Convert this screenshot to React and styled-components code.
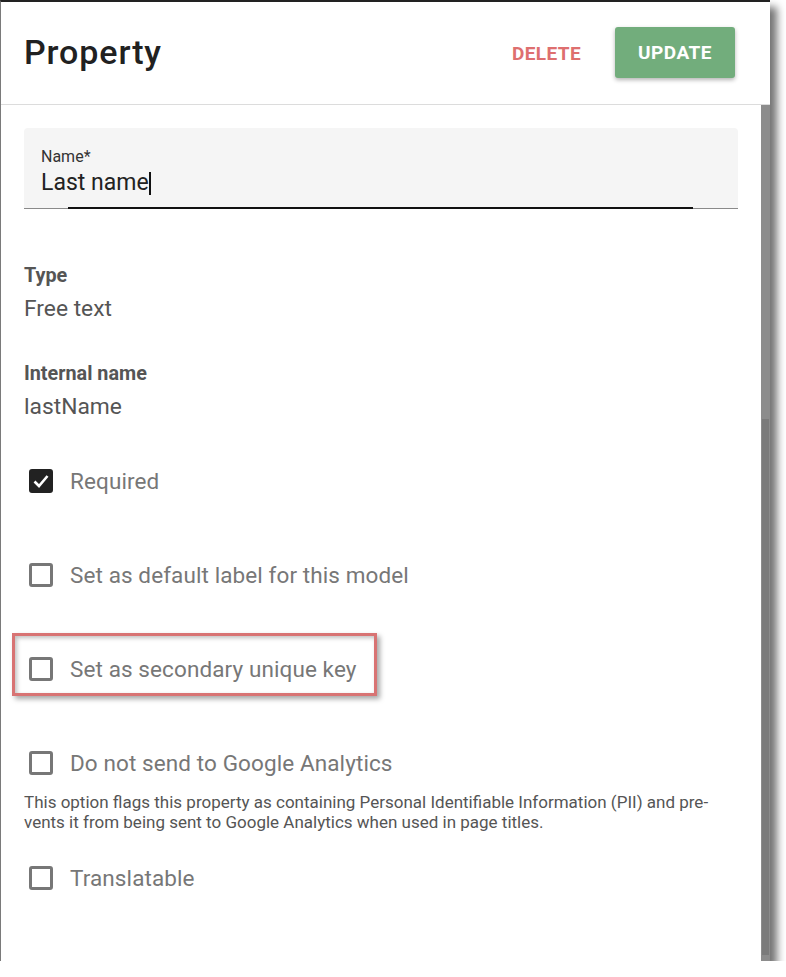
import React from "react";
import styled, { createGlobalStyle } from "styled-components";

const GlobalStyle = createGlobalStyle`
  body {
    margin: 0;
    background: #fff;
    font-family: Roboto, "Liberation Sans", sans-serif;
  }
`;

const Frame = styled.div`
  width: 769px;
  height: 959px;
  border-left: 1px solid #7a7a7a;
  border-top: 2px solid #222;
  background: #fff;
  box-shadow: 7px 7px 8px rgba(0, 0, 0, 0.55);
  display: flex;
  flex-direction: column;
`;

const Header = styled.header`
  height: 102px;
  flex: none;
  display: flex;
  align-items: center;
  justify-content: space-between;
  padding: 0 35px 0 23px;
  border-bottom: 1px solid #dcdcdc;
`;

const Title = styled.h1`
  margin: 0;
  font-size: 34px;
  font-weight: 500;
  color: #212121;
  letter-spacing: 0.9px;
  position: relative;
  top: -1px;
`;

const Actions = styled.div`
  display: flex;
  align-items: center;
  gap: 34px;
`;

const TextButton = styled.button`
  border: none;
  background: none;
  padding: 0;
  font-family: inherit;
  font-size: 19px;
  font-weight: 700;
  color: #de6f6f;
  letter-spacing: 0.4px;
`;

const RaisedButton = styled.button`
  width: 120px;
  height: 51px;
  border: none;
  border-radius: 3px;
  background: #72ad7c;
  color: #fff;
  font-family: inherit;
  font-size: 19px;
  font-weight: 700;
  letter-spacing: 0.5px;
  box-shadow: 0 2px 4px rgba(0, 0, 0, 0.3);
  position: relative;
  top: -1px;
`;

const Body = styled.div`
  flex: 1;
  display: flex;
  min-height: 0;
`;

const Content = styled.div`
  flex: 1;
  padding: 23px 23px 0 23px;
  display: flex;
  flex-direction: column;
`;

const ScrollTrack = styled.div`
  width: 9px;
  flex: none;
  background: #8c8c8c;
  display: flex;
  flex-direction: column;
  justify-content: flex-end;
  align-items: center;
  padding-bottom: 6px;
`;

const ScrollThumb = styled.div`
  width: 7px;
  height: 536px;
  background: #7b7b7b;
`;

const Field = styled.div`
  height: 81px;
  background: #f5f5f5;
  border-radius: 4px 4px 0 0;
  border-bottom: 1px solid #8a8a8a;
  padding: 19px 17px 0;
  position: relative;
  box-sizing: border-box;
  display: flex;
  flex-direction: column;
`;

const FieldLabel = styled.label`
  font-size: 16px;
  line-height: 20px;
  color: #333;
`;

const FieldValue = styled.div`
  font-size: 23px;
  line-height: 30px;
  color: #222;
  display: flex;
  align-items: center;
  margin-top: 1px;
`;

const Caret = styled.span`
  width: 2px;
  height: 23px;
  background: #111;
`;

const FocusLine = styled.div`
  position: absolute;
  left: 44px;
  right: 45px;
  bottom: -1px;
  height: 2px;
  background: #111;
`;

const Info = styled.div`
  display: flex;
  flex-direction: column;
  gap: 8px;
  margin-top: ${(p) => p.$top}px;
`;

const InfoLabel = styled.div`
  font-size: 19.8px;
  line-height: 24px;
  font-weight: 700;
  color: #555;
`;

const InfoValue = styled.div`
  font-size: 22.8px;
  line-height: 26px;
  color: #555;
`;

const Row = styled.label`
  position: relative;
  height: 40px;
  display: flex;
  align-items: center;
  gap: 17px;
  padding-left: 5px;
  margin-top: ${(p) => p.$top}px;
`;

const Box = styled.span`
  width: 24px;
  height: 24px;
  flex: none;
  box-sizing: border-box;
  border-radius: 3px;
  border: 3px solid ${(p) => (p.$checked ? "#222" : "#777")};
  background: ${(p) => (p.$checked ? "#222" : "transparent")};
  display: flex;
  align-items: center;
  justify-content: center;
`;

const RowText = styled.span`
  font-size: 22.5px;
  color: #777;
  letter-spacing: 0.1px;
`;

const Highlight = styled.span`
  position: absolute;
  left: -12px;
  top: -16px;
  width: 365px;
  height: 63px;
  box-sizing: border-box;
  border: 3px solid #d87373;
  box-shadow: 3px 3px 5px rgba(0, 0, 0, 0.35), inset 2px 2px 4px rgba(0, 0, 0, 0.25);
  pointer-events: none;
`;

const Hint = styled.p`
  margin: 9px 0 0;
  font-size: 17px;
  line-height: 20px;
  color: #555;
`;

const Checkbox = ({ checked, label, top, highlighted }) => (
  <Row $top={top}>
    <Box $checked={checked}>
      {checked && (
        <svg width="16" height="14" viewBox="0 0 16 14">
          <path d="M1.5 7.5 L6 12 L14.5 2" fill="none" stroke="#fff" strokeWidth="2.6" />
        </svg>
      )}
    </Box>
    <RowText>{label}</RowText>
    {highlighted && <Highlight />}
  </Row>
);

export default function App() {
  return (
    <>
      <GlobalStyle />
      <Frame>
        <Header>
          <Title>Property</Title>
          <Actions>
            <TextButton>DELETE</TextButton>
            <RaisedButton>UPDATE</RaisedButton>
          </Actions>
        </Header>
        <Body>
          <Content>
            <Field>
              <FieldLabel>Name*</FieldLabel>
              <FieldValue>
                Last name
                <Caret />
              </FieldValue>
              <FocusLine />
            </Field>
            <Info $top={55}>
              <InfoLabel>Type</InfoLabel>
              <InfoValue>Free text</InfoValue>
            </Info>
            <Info $top={40}>
              <InfoLabel>Internal name</InfoLabel>
              <InfoValue>lastName</InfoValue>
            </Info>
            <Checkbox checked label="Required" top={41} />
            <Checkbox label="Set as default label for this model" top={54} />
            <Checkbox label="Set as secondary unique key" top={54} highlighted />
            <Checkbox label="Do not send to Google Analytics" top={54} />
            <Hint>
              This option flags this property as containing Personal Identifiable Information (PII) and pre-
              <br />
              vents it from being sent to Google Analytics when used in page titles.
            </Hint>
            <Checkbox label="Translatable" top={26} />
          </Content>
          <ScrollTrack>
            <ScrollThumb />
          </ScrollTrack>
        </Body>
      </Frame>
    </>
  );
}
